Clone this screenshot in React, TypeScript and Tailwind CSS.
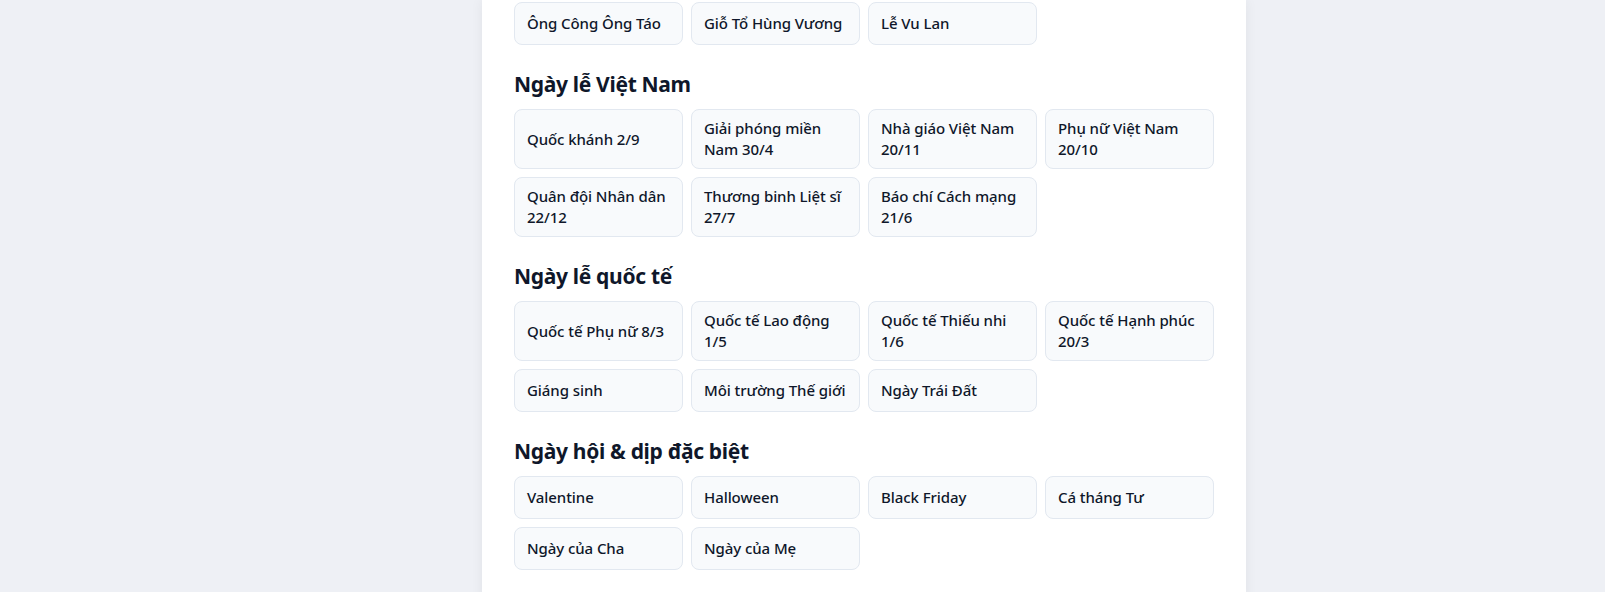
const sections: { title: string | null; items: string[] }[] = [
  {
    title: null,
    items: ['Ông Công Ông Táo', 'Giỗ Tổ Hùng Vương', 'Lễ Vu Lan'],
  },
  {
    title: 'Ngày lễ Việt Nam',
    items: [
      'Quốc khánh 2/9',
      'Giải phóng miền Nam 30/4',
      'Nhà giáo Việt Nam 20/11',
      'Phụ nữ Việt Nam 20/10',
      'Quân đội Nhân dân 22/12',
      'Thương binh Liệt sĩ 27/7',
      'Báo chí Cách mạng 21/6',
    ],
  },
  {
    title: 'Ngày lễ quốc tế',
    items: [
      'Quốc tế Phụ nữ 8/3',
      'Quốc tế Lao động 1/5',
      'Quốc tế Thiếu nhi 1/6',
      'Quốc tế Hạnh phúc 20/3',
      'Giáng sinh',
      'Môi trường Thế giới',
      'Ngày Trái Đất',
    ],
  },
  {
    title: 'Ngày hội & dịp đặc biệt',
    items: ['Valentine', 'Halloween', 'Black Friday', 'Cá tháng Tư', 'Ngày của Cha', 'Ngày của Mẹ'],
  },
]

function OccasionCard({ label }: { label: string }) {
  return (
    <button
      type="button"
      className="flex min-h-[43px] items-center rounded-lg border border-[#e2e8f0] bg-[#f8fafc] px-3 py-2 text-left text-[15px] leading-[21px] font-medium tracking-[-0.005em] text-[#0f172a] hover:border-[#cbd5e1]"
    >
      {label}
    </button>
  )
}

export default function App() {
  return (
    <div className="min-h-[592px] bg-[#eef0f5] font-['Noto_Sans','DejaVu_Sans',sans-serif]">
      <div className="ml-[482px] min-h-[592px] w-[764px] bg-white px-8 pt-[2px] pb-8 shadow-[0_0_12px_rgba(15,23,42,0.06)]">
        {sections.map((s, i) => (
          <section key={i} className={i > 0 ? 'mt-6' : ''}>
            {s.title && (
              <h2 className="mb-[10px] text-[21px] leading-[30px] font-bold tracking-[-0.015em] text-[#0f172a]">
                {s.title}
              </h2>
            )}
            <div className="grid grid-cols-4 gap-2">
              {s.items.map((item) => (
                <OccasionCard key={item} label={item} />
              ))}
            </div>
          </section>
        ))}
      </div>
    </div>
  )
}
